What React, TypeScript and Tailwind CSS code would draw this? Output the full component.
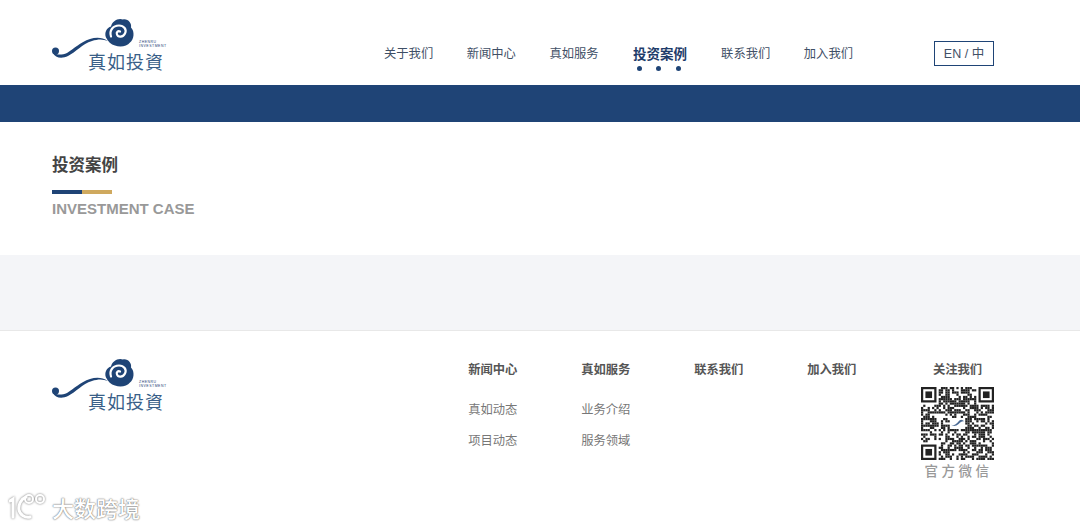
const cjk = "font-['Noto_Sans_CJK_SC','Liberation_Sans',sans-serif]";

const navItems = ['关于我们', '新闻中心', '真如服务', '投资案例', '联系我们', '加入我们'];

const footerCols = [
  { title: '新闻中心', links: ['真如动态', '项目动态'] },
  { title: '真如服务', links: ['业务介绍', '服务领域'] },
  { title: '联系我们', links: [] },
  { title: '加入我们', links: [] },
];

function Logo() {
  return (
    <div className="relative w-[114px] h-[53px] shrink-0">
      <svg width="84" height="46" viewBox="0 0 84 46" className="absolute left-0 top-0">
        <path
          d="M1 37C3 42 10 43 16 40C24 36 30 28 40 25C46 23 51 23 56 25C50 21 44 21 38 23C28 26 22 33 15 37C10 39 5 39 3 37z"
          fill="#1f4476"
        />
        <circle cx="3.500" cy="35" r="3.500" fill="#1f4476" />
        <g transform="translate(0 1.5)">
          <path
            d="M54 20C52 15 55 10 59 9C60 4 66 0 71 2C76 1 80 6 79 10C83 14 82 22 78 25C75 29 68 30 63 28C59 27 56 24 54 20z"
            fill="#1f4476"
          />
          <path
            d="M59 19C57 13 61 8 67 8C72 8 75 12 73 16C71 20 66 20 65 17C64 15 66 13 68 14"
            fill="none"
            stroke="#fff"
            strokeWidth="2.200"
            strokeLinecap="round"
          />
        </g>
      </svg>
      <span className={`absolute left-[36px] top-[36px] text-[18px] leading-[18px] tracking-[1px] text-[#3a5f88] whitespace-nowrap ${cjk}`}>
        真如投資
      </span>
      <div className="absolute left-[87px] top-[24px] text-[3.500px] leading-[4px] tracking-[0.5px] text-[#1f4476] font-['Liberation_Sans',sans-serif]">
        <div>ZHENRU</div>
        <div>INVESTMENT</div>
      </div>
    </div>
  );
}

// QR modules come from a small hash, only the three finder squares are real
function QrCode() {
  const n = 33;
  const cells: React.ReactNode[] = [];
  const inFinder = (x: number, y: number) =>
    (x < 8 && y < 8) || (x > n - 9 && y < 8) || (x < 8 && y > n - 9);
  for (let y = 0; y < n; y++) {
    for (let x = 0; x < n; x++) {
      if (inFinder(x, y)) continue;
      if (x > 12 && x < 20 && y > 13 && y < 19) continue;
      const s = Math.sin(x * 12.9898 + y * 78.233) * 43758.5453;
      if (s - Math.floor(s) > 0.46) cells.push(<rect key={`${x}-${y}`} x={x} y={y} width="1" height="1" />);
    }
  }
  const finder = (x: number, y: number) => (
    <g key={`f${x}${y}`}>
      <rect x={x} y={y} width="7" height="7" />
      <rect x={x + 1} y={y + 1} width="5" height="5" fill="#fff" />
      <rect x={x + 2} y={y + 2} width="3" height="3" />
    </g>
  );
  return (
    <svg width="73" height="73" viewBox="0 0 33 33" fill="#222" className="block">
      {cells}
      {finder(0, 0)}
      {finder(26, 0)}
      {finder(0, 26)}
      <path d="M13.500 17c1.500 1 3-1 4-2 .7-.6 1.500 0 2 .5-1-.2-1.500.3-2.500 1.200-1 .9-2.500 1.300-3.500.3z" fill="#4a6a94" />
    </svg>
  );
}

export default function App() {
  return (
    <div className={`w-[1080px] h-[528px] bg-white overflow-hidden relative ${cjk}`}>
      <header className="h-[85px] flex items-center pl-[52px] pr-[86px]">
        <Logo />
        <nav className="ml-[218px] flex gap-[33.500px] pt-[21px]">
          {navItems.map((item) => {
            const active = item === '投资案例';
            return (
              <div key={item} className={active ? 'relative ml-[0.800px] mr-[0.700px]' : 'relative'}>
                <span
                  className={
                    active
                      ? 'block text-[13.500px] leading-[20px] font-bold text-[#1f3d6b] whitespace-nowrap'
                      : 'block text-[12.300px] leading-[20px] text-[#3f4f66] whitespace-nowrap'
                  }
                >
                  {item}
                </span>
                {active && (
                  <div className="absolute left-[4px] right-[6px] top-[22.500px] flex justify-between">
                    <i className="w-[5px] h-[5px] rounded-full bg-[#1f4476]" />
                    <i className="w-[5px] h-[5px] rounded-full bg-[#1f4476]" />
                    <i className="w-[5px] h-[5px] rounded-full bg-[#1f4476]" />
                  </div>
                )}
              </div>
            );
          })}
        </nav>
        <div className="ml-auto mt-[22px] w-[60px] h-[25px] pt-[2px] border border-[#1f4476] flex items-center justify-center text-[12.500px] text-[#3f4f66] font-['Liberation_Sans','Noto_Sans_CJK_SC',sans-serif]">
          EN / 中
        </div>
      </header>

      <div className="h-[37px] bg-[#1f4476]" />

      <section className="h-[133px] pl-[52px] pt-[31px]">
        <h1 className="text-[16.500px] leading-[22px] font-bold text-[#444]">投资案例</h1>
        <div className="flex mt-[15px]">
          <i className="w-[30px] h-[4px] bg-[#1f4476]" />
          <i className="w-[30px] h-[4px] bg-[#cfa95e]" />
        </div>
        <p className="mt-[5px] text-[15px] leading-[20px] font-bold text-[#999] font-['Liberation_Sans',sans-serif]">
          INVESTMENT CASE
        </p>
      </section>

      <div className="h-[76px] bg-[#f4f5f8] border-b border-[#e8e8e8]" />

      <footer className="flex pl-[52px] pr-[86px] pt-[25px]">
        <Logo />
        <div className="ml-[302.200px] flex gap-[64px]">
          {footerCols.map((col) => (
            <div key={col.title} className="w-[49px] pt-[3px]">
              <h3 className="text-[12.300px] leading-[20px] font-bold text-[#555] whitespace-nowrap">{col.title}</h3>
              <ul className="mt-[20px] flex flex-col gap-[11px]">
                {col.links.map((link) => (
                  <li key={link} className="text-[12.300px] leading-[20px] text-[#777] whitespace-nowrap">
                    {link}
                  </li>
                ))}
              </ul>
            </div>
          ))}
        </div>
        <div className="ml-auto w-[73px] flex flex-col items-center pt-[3px]">
          <h3 className="text-[12.300px] leading-[20px] font-bold text-[#555] whitespace-nowrap">关注我们</h3>
          <div className="mt-[8px]">
            <QrCode />
          </div>
          <p className="ml-[2px] text-[13.500px] leading-[20px] tracking-[3.500px] font-medium text-[#999] whitespace-nowrap">官方微信</p>
        </div>
      </footer>

      {/* watermark over the page */}
      <div className="absolute left-[9px] top-[492px] flex items-center gap-[5px]">
        <svg width="38" height="30" viewBox="0 0 38 30" className="drop-shadow-[0_0_1px_#777]">
          <g fill="none" stroke="#fff" strokeLinecap="round">
            <path d="M1 9l3-2v18" strokeWidth="3" />
            <path d="M17 5c-5 2-8 8-7 13s6 8 11 7" strokeWidth="3" />
            <circle cx="20" cy="7" r="4" strokeWidth="2" />
            <circle cx="31" cy="7" r="4" strokeWidth="2" />
          </g>
        </svg>
        <span className="text-[22px] leading-[30px] font-medium text-white [text-shadow:0_0_1px_#666,0_0_2px_#888]">大数跨境</span>
      </div>
    </div>
  );
}
